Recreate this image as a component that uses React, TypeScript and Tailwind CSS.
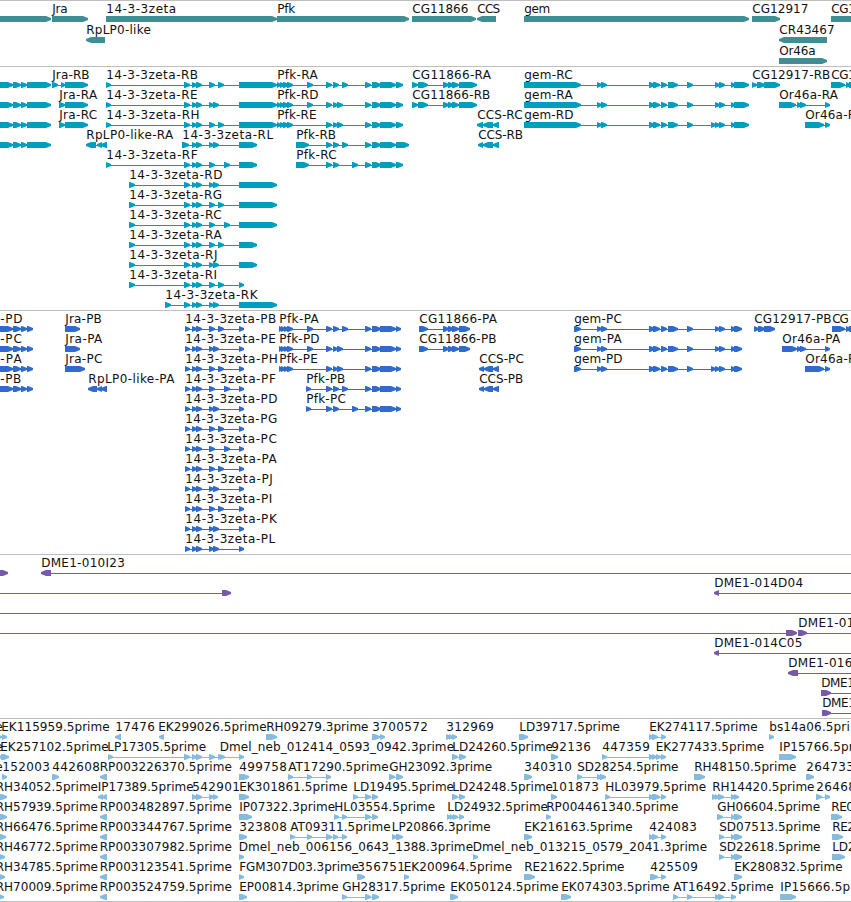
import React from "react";

type Feature = {
  label?: string;
  x?: number;
  // exon blocks as "start:end" pairs
  blocks: string;
  left?: boolean;
  // where the intron line starts / ends when it runs past the blocks
  from?: number;
  to?: number;
};

type Row = Feature[];

// advance widths of the label letters, in px
const ADVANCE: Record<string, number> = {
  "-": 6.6, ".": 4, _: 6, A: 8, B: 7.5, C: 8, D: 8.8, E: 7, F: 7, G: 8.5, H: 9, I: 3.5,
  J: 4, K: 8, L: 6.5, M: 10, O: 9, P: 7, R: 7.8, S: 7, T: 7, a: 7, b: 8, e: 7, f: 4,
  g: 8, i: 3.5, k: 7, l: 3.5, m: 11, n: 8, p: 7.8, r: 4.5, s: 6, t: 5, z: 6,
};

const labelWidth = (text: string) =>
  text.split("").reduce((sum, c) => sum + (ADVANCE[c] ?? 7.95), 0);

const f = (label: string, x: number, blocks: string, left = false): Feature => ({
  label,
  x,
  blocks,
  left,
});

// 14-3-3zeta splice patterns
const ZB = "192:197 196:202 209:215 218:224";
const ZE = "192:197 196:202 209:214 213:219";
const ZF = "192:197 196:202 209:215 224:230";
const zr = (id: string, x: number, start: string, mid: string, end: string) =>
  f("14-3-3zeta-R" + id, x, `${start} ${mid} ${end}`);
const zp = (id: string, mid: string) =>
  f("14-3-3zeta-P" + id, 185, `185:190 ${mid} 239:244`);

const PFK_START = "277:281 280:285 283:289 287:293";
const PFK_PSTART = "279:283 281:286 284:289 287:293";
const PFK_TAIL = "365:371 372:381 380:396";
const GEM = "597:602 601:607 649:655 653:660 661:667 668:678 687:693";

const LEFT_R: Feature = { blocks: "-5:13 13:21 21:27 27:51" };
const LEFT_P = "-5:13 13:21 21:27 27:33";

const genes: Row[] = [
  [
    { blocks: "-9:51" },
    f("Jra", 52, "52:88"),
    f("14-3-3zeta", 106, "106:277"),
    f("Pfk", 277, "277:409"),
    f("CG11866", 412, "412:476"),
    f("CCS", 477, "477:496", true),
    f("gem", 524, "524:749"),
    f("CG12917", 752, "752:780"),
    f("CG1", 831, "831:870"),
  ],
  [f("RpLP0-like", 86, "86:105", true), f("CR43467", 779, "779:827", true)],
  [f("Or46a", 779, "779:827")],
];

const transcripts: Row[] = [
  [
    LEFT_R,
    f("Jra-RB", 52, "52:58 61:65 65:88"),
    zr("B", 106, "106:111 184:190", ZB, "239:277"),
    f("Pfk-RA", 277, `${PFK_START} 307:313 326:332 333:339 342:348 ${PFK_TAIL} 396:403`),
    f("CG11866-RA", 412, "412:418 418:428 443:449 448:454 452:459 459:477"),
    f("gem-RC", 524, `524:581 ${GEM} 715:720 719:725 731:735 734:749`),
    f("CG12917-RB", 752, "752:757 757:765 764:780"),
    f("CG1", 831, "831:845 846:851 849:860"),
  ],
  [
    LEFT_R,
    f("Jra-RA", 59, "59:65 65:88"),
    zr("E", 106, "106:111 184:190", ZE, "239:277"),
    f("Pfk-RD", 277, `${PFK_START} 307:313 326:332 333:338 337:343 ${PFK_TAIL} 396:403`),
    f("CG11866-RB", 412, "412:418 418:428 443:449 448:454 452:459 459:477"),
    f("gem-RA", 524, `524:581 ${GEM} 715:720 719:725 731:735 734:749`),
    f("Or46a-RA", 779, "779:796 797:802 800:806 825:830"),
  ],
  [
    LEFT_R,
    f("Jra-RC", 59, "59:65 65:88"),
    zr("H", 106, "106:111 184:190", ZB, "239:277"),
    f("Pfk-RE", 277, `${PFK_START} 326:332 333:338 337:343 ${PFK_TAIL} 396:403`),
    f("CCS-RC", 477, "477:483 483:493 493:499", true),
    f("gem-RD", 524, `524:581 ${GEM} 711:716 715:720 719:725 731:735 734:749`),
    f("Or46a-R", 805, "805:824 825:830"),
  ],
  [
    LEFT_R,
    f("RpLP0-like-RA", 86, "86:96 97:102 101:107", true),
    zr("L", 182, "182:189", ZE, "239:257"),
    f("Pfk-RB", 296, `296:309 326:332 333:339 342:348 ${PFK_TAIL} 396:409`),
    f("CCS-RB", 478, "478:483 483:493 493:499", true),
  ],
  [
    zr("F", 106, "106:111 184:190", ZF, "239:257"),
    f("Pfk-RC", 296, `296:309 326:332 333:339 352:358 ${PFK_TAIL} 396:403`),
  ],
  [zr("D", 129, "129:135 184:190", ZE, "239:277")],
  [zr("G", 129, "129:135 184:190", ZB, "239:277")],
  [zr("C", 129, "129:135 184:190", ZF, "239:277")],
  [zr("A", 129, "129:135 184:190", ZB, "239:257")],
  [zr("J", 129, "129:135 184:190", ZE, "239:257")],
  [zr("I", 129, "129:135 184:190", ZB, "239:244")],
  [zr("K", 165, "165:171 184:190", ZE, "239:277")],
];

const proteins: Row[] = [
  [
    f("-PD", 0, LEFT_P),
    f("Jra-PB", 65, "65:80"),
    zp("B", ZB),
    f("Pfk-PA", 279, `${PFK_PSTART} 307:313 326:332 333:339 342:348 ${PFK_TAIL} 396:401`),
    f("CG11866-PA", 419, "419:428 443:449 448:454 452:459 459:470"),
    f("gem-PC", 574, `574:581 ${GEM} 715:720 719:725 731:736 734:742`),
    f("CG12917-PB", 754, "754:759 758:765 764:775"),
    f("CG", 832, "832:845 846:851 849:860"),
  ],
  [
    f("-PC", 0, LEFT_P),
    f("Jra-PA", 65, "65:80"),
    zp("E", ZE),
    f("Pfk-PD", 279, `${PFK_PSTART} 307:313 326:332 333:338 337:343 ${PFK_TAIL} 396:401`),
    f("CG11866-PB", 419, "419:428 443:449 448:454 452:459 459:470"),
    f("gem-PA", 574, `574:581 ${GEM} 715:720 719:725 731:736 734:742`),
    f("Or46a-PA", 782, "782:797 797:802 800:806 825:830"),
  ],
  [
    f("-PA", 0, LEFT_P),
    f("Jra-PC", 65, "65:85"),
    zp("H", ZB),
    f("Pfk-PE", 279, `${PFK_PSTART} 326:332 333:338 337:343 ${PFK_TAIL} 396:401`),
    f("CCS-PC", 479, "479:484 484:493 493:499", true),
    f("gem-PD", 574, `574:581 ${GEM} 711:716 715:720 719:725 731:736 734:742`),
    f("Or46a-P", 805, "805:824 825:830"),
  ],
  [
    f("-PB", 0, LEFT_P),
    f("RpLP0-like-PA", 88, "88:97 97:102 101:107", true),
    zp("F", ZF),
    f("Pfk-PB", 306, `306:311 326:332 333:339 342:348 ${PFK_TAIL} 396:401`),
    f("CCS-PB", 479, "479:484 484:493 493:499", true),
  ],
  [
    zp("D", ZE),
    f("Pfk-PC", 306, `306:311 326:332 333:339 352:358 ${PFK_TAIL} 396:401`),
  ],
  [zp("G", ZB)],
  [zp("C", ZF)],
  [zp("A", ZB)],
  [zp("J", ZE)],
  [zp("I", ZB)],
  [zp("K", ZE)],
  [zp("L", ZE)],
];

const bacs: Row[] = [
  [{ blocks: "-9:8" }, { ...f("DME1-010I23", 41, "41:51", true), to: 860 }],
  [
    { blocks: "222:231", from: -5 },
    { ...f("DME1-014D04", 714, "714:719", true), to: 860 },
  ],
  [{ blocks: "", from: -5, to: 860 }],
  [
    { blocks: "786:797", from: -5 },
    { ...f("DME1-01", 798, "798:807"), to: 860 },
  ],
  [{ ...f("DME1-014C05", 714, "714:719", true), to: 860 }],
  [{ ...f("DME1-016", 788, "788:798", true), to: 860 }],
  [{ ...f("DME1", 821, "821:831"), to: 860 }],
  [{ ...f("DME1", 822, "822:831"), to: 860 }],
];

const ests: Row[] = [
  [
    f("e", -5, "-9:2"),
    f("EK115959.5prime", 1, "2:7"),
    f("17476", 115, "115:121", true),
    f("EK299026.5prime", 158, "159:164", true),
    f("RH09279.3prime", 266, "266:277"),
    f("3700572", 372, "372:380 380:385"),
    f("312969", 446, "446:451 449:453 452:457"),
    f("LD39717.5prime", 519, "519:528"),
    f("EK274117.5prime", 649, "649:654 652:658 661:666"),
    f("bs14a06.5pri", 769, "769:774"),
  ],
  [
    f("e", -5, "-9:2"),
    f("EK257102.5prime", 0, "1:9"),
    f("LP17305.5prime", 107, "108:113 184:190 192:197 196:202 209:215 218:223"),
    f("Dmel_neb_012414_0593_0942.3prime", 219.5, "220:225 239:244"),
    f("LD24260.5prime", 452, "452:458 459:466"),
    f("92136", 551, "551:558"),
    f("447359", 602, "602:607 649:654 652:657"),
    f("EK277433.5prime", 655.5, "656:661 661:666"),
    f("IP15766.5pr", 779, "779:796"),
  ],
  [
    f("e", -5, ""),
    f("152003", 2, "2:7"),
    f("442608", 52, "52:59"),
    f("RP003226370.5prime", 99.5, "100:107", true),
    f("499758", 239, "239:249"),
    f("AT17290.5prime", 288, "288:293 307:312 326:331"),
    f("GH23092.3prime", 389, "389:395 396:403"),
    f("340310", 524, "524:532"),
    f("SD28254.5prime", 577, "577:582 597:602 600:606"),
    f("RH48150.5prime", 694, "694:705"),
    f("264733", 806, "806:814"),
  ],
  [
    f("RH34052.5prime", -4.5, "-9:7"),
    f("IP17389.5prime", 97.5, "98:103 102:107", true),
    f("542901", 192, "192:197 196:202 209:214 213:218"),
    f("EK301861.5prime", 239, "239:249"),
    f("LD19495.5prime", 353, "353:358 365:371 372:378"),
    f("LD24248.5prime", 452, "452:458 459:465"),
    f("101873", 551, "551:557"),
    f("HL03979.5prime", 605, "605:610 649:654 652:660 661:666"),
    f("RH14420.5prime", 712, "712:717 715:719 718:724 731:736 734:739"),
    f("26468", 816, "816:822 825:830"),
  ],
  [
    f("RH57939.5prime", -4.5, "-9:7"),
    f("RP003482897.5prime", 99.5, "100:107", true),
    f("IP07322.3prime", 239, "239:252"),
    f("HL03554.5prime", 334, "334:339 342:347 365:371 372:378"),
    f("LD24932.5prime", 447, "447:451 450:454 453:458 459:464"),
    f("RP004461340.5prime", 546, "546:551"),
    f("GH06604.5prime", 717, "717:723 731:735 734:742"),
    f("RE0", 831, "831:842"),
  ],
  [
    f("RH66476.5prime", -4.5, "-9:6"),
    f("RP003344767.5prime", 99.5, "100:107", true),
    f("323808", 239, "239:247"),
    f("AT09311.5prime", 290, "290:295 307:312 326:332 333:338 342:347"),
    f("LP20866.3prime", 391.5, "392:397 396:403"),
    f("EK216163.5prime", 524, "524:532"),
    f("424083", 649, "649:654 652:658 661:666"),
    f("SD07513.5prime", 719, "719:724 731:735 734:742"),
    f("RE2", 832, "832:843"),
  ],
  [
    f("RH46772.5prime", -4.5, "-9:5"),
    f("RP003307982.5prime", 99.5, "100:107", true),
    f("Dmel_neb_006156_0643_1388.3prime", 238.5, "239:244"),
    f("Dmel_neb_013215_0579_2041.3prime", 472.5, "473:478"),
    f("SD22618.5prime", 719, "719:724 731:735 734:742"),
    f("LD2", 832, "832:845"),
  ],
  [
    f("RH34785.5prime", -4.5, "-9:5"),
    f("RP003123541.5prime", 99.5, "100:107", true),
    f("FGM307D03.3prime", 239, "239:244"),
    f("356751", 357, "357:365"),
    f("EK200964.5prime", 403.5, "404:409"),
    f("RE21622.5prime", 524, "524:535"),
    f("425509", 650, "650:658 661:666"),
    f("EK280832.5prime", 734, "734:742"),
  ],
  [
    f("RH70009.5prime", -4.5, "-9:4"),
    f("RP003524759.5prime", 99.5, "100:107", true),
    f("EP00814.3prime", 239, "239:247"),
    f("GH28317.5prime", 342, "342:347 365:371 372:379"),
    f("EK050124.5prime", 450, "450:458"),
    f("EK074303.5prime", 561, "561:571"),
    f("AT16492.5prime", 673, "673:678 687:692 715:720 718:724 731:736"),
    f("IP15666.5p", 780, "780:796"),
  ],
];

function blockPoints(a: number, b: number, left?: boolean) {
  const head = Math.min(5, b - a);
  return left
    ? `${b},12 ${a + head},12 ${a},14 ${a},16 ${a + head},18 ${b},18`
    : `${a},12 ${b - head},12 ${b},14 ${b},16 ${b - head},18 ${a},18`;
}

function FeatureGlyph({ feature }: { feature: Feature }) {
  const blocks = feature.blocks
    .split(" ")
    .filter(Boolean)
    .map((b) => b.split(":").map(Number));
  const start = feature.from ?? (blocks.length ? blocks[0][0] : 0);
  const end = feature.to ?? (blocks.length ? blocks[blocks.length - 1][1] : 0);

  return (
    <g>
      {(blocks.length > 1 || feature.from !== undefined || feature.to !== undefined) && (
        <rect x={start} y={15} width={end - start} height={1} />
      )}
      {blocks.map(([a, b], i) => (
        <polygon key={i} points={blockPoints(a, b, feature.left)} />
      ))}
      {feature.label && (
        <text
          x={(feature.x ?? 0) + 0.2}
          y={9}
          textLength={labelWidth(feature.label)}
          className="fill-[#111111]"
        >
          {feature.label}
        </text>
      )}
    </g>
  );
}

function Track({
  rows,
  className,
  rowClass = "h-5",
}: {
  rows: Row[];
  className: string;
  rowClass?: string;
}) {
  return (
    <section className={`flex flex-col border-t border-[#bebebe] pt-[3px] ${className}`}>
      {rows.map((row, i) => (
        <svg
          key={i}
          className={`w-full shrink-0 overflow-visible fill-current text-[12px] ${rowClass}`}
        >
          {row.map((feature, j) => (
            <FeatureGlyph key={j} feature={feature} />
          ))}
        </svg>
      ))}
    </section>
  );
}

export default function App() {
  return (
    <main className="flex h-[902px] w-[851px] flex-col overflow-hidden bg-white font-['DejaVu_Sans',sans-serif]">
      <Track rows={genes} rowClass="h-[21px]" className="h-[66px] text-[#408e94]" />
      <Track rows={transcripts} className="h-[244px] text-[#009dbf]" />
      <Track rows={proteins} className="h-[244px] text-[#306bcb]" />
      <Track rows={bacs} className="h-[164px] text-[#7759a9]" />
      <Track rows={ests} className="h-[184px] border-b text-[#87bbdd]" />
    </main>
  );
}
